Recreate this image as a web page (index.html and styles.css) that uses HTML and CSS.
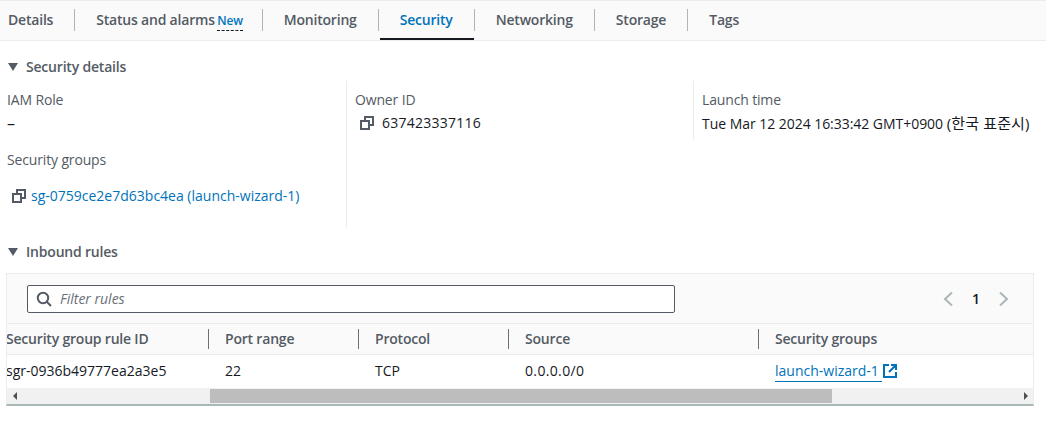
FILE: index.html
```html
<!DOCTYPE html>
<html lang="en">
<head>
<meta charset="utf-8">
<title>Security</title>
<link rel="stylesheet" href="styles.css">
</head>
<body>
<nav class="tabs">
  <a class="tab tab-first">Details</a>
  <a class="tab">Status and alarms <span class="new">New</span></a>
  <a class="tab">Monitoring</a>
  <a class="tab tab-active">Security</a>
  <a class="tab">Networking</a>
  <a class="tab">Storage</a>
  <a class="tab tab-last">Tags</a>
</nav>
<section class="section">
  <h2 class="heading"><svg class="caret" viewBox="0 0 10 8" width="10" height="8"><path d="M0 0h10L5 8z" fill="#545b64"/></svg>Security details</h2>
  <div class="details">
    <div class="col col-1">
      <div class="label">IAM Role</div>
      <div class="value dash">–</div>
      <div class="label label-sg">Security groups</div>
      <div class="value value-sg">
        <svg class="copy" viewBox="0 0 14 14" width="14" height="14"><path d="M5 4V1h8v8h-3M1 5h8v8H1z" fill="none" stroke="#545b64" stroke-width="2"/></svg>
        <a class="link">sg-0759ce2e7d63bc4ea (launch-wizard-1)</a>
      </div>
    </div>
    <div class="col col-2">
      <div class="label">Owner ID</div>
      <div class="value value-owner">
        <svg class="copy" viewBox="0 0 14 14" width="14" height="14"><path d="M5 4V1h8v8h-3M1 5h8v8H1z" fill="none" stroke="#545b64" stroke-width="2"/></svg>
        <span class="digits">637423337116</span>
      </div>
    </div>
    <div class="col col-3">
      <div class="label">Launch time</div>
      <div class="value"><span class="date">Tue Mar 12 2024 16:33:42 GMT+0900</span> <span class="ko">(한국 표준시)</span></div>
    </div>
  </div>
  <h2 class="heading heading-inbound"><svg class="caret" viewBox="0 0 10 8" width="10" height="8"><path d="M0 0h10L5 8z" fill="#545b64"/></svg>Inbound rules</h2>
  <div class="table">
    <div class="toolbar">
      <div class="filter">
        <svg class="search" viewBox="0 0 16 16" width="16" height="16"><circle cx="7" cy="7" r="5.2" fill="none" stroke="#545b64" stroke-width="2"/><path d="M11 11l4 4" stroke="#545b64" stroke-width="2"/></svg>
        <span class="placeholder">Filter rules</span>
      </div>
      <div class="pager">
        <svg viewBox="0 0 12 16" width="12" height="16"><path d="M10 1.5L3 8l7 6.5" fill="none" stroke="#aab7b8" stroke-width="2"/></svg>
        <span class="page">1</span>
        <svg viewBox="0 0 12 16" width="12" height="16"><path d="M2 1.5L9 8l-7 6.5" fill="none" stroke="#aab7b8" stroke-width="2"/></svg>
      </div>
    </div>
    <div class="row row-head">
      <div class="cell cell-1">Security group rule ID</div>
      <div class="cell">Port range</div>
      <div class="cell">Protocol</div>
      <div class="cell cell-wide">Source</div>
      <div class="cell">Security groups</div>
    </div>
    <div class="row row-body">
      <div class="cell cell-1">sgr-0936b49777ea2a3e5</div>
      <div class="cell">22</div>
      <div class="cell">TCP</div>
      <div class="cell cell-wide"><span class="ip">0.0.0.0/0</span></div>
      <div class="cell"><a class="link link-ext">launch-wizard-1 </a><svg class="ext" viewBox="0 0 14 14" width="14" height="14"><path d="M6 1H1v12h12V8M8 1h5v5M13 1L6 8" fill="none" stroke="#0073bb" stroke-width="2"/></svg></div>
    </div>
    <div class="scrollbar">
      <span class="arrow arrow-left"></span>
      <div class="track"><div class="thumb"></div></div>
      <span class="arrow arrow-right"></span>
    </div>
  </div>
</section>
</body>
</html>
```
FILE: styles.css
```css
* { box-sizing: border-box; }
html, body { margin: 0; padding: 0; background: #fff; }
body {
  font-family: "Open Sans", "Noto Sans", "Noto Sans CJK KR", sans-serif;
  font-size: 14px;
  line-height: 20px;
  color: #16191f;
  overflow: hidden;
}
.tabs {
  display: flex;
  height: 41px;
  padding-top: 8px;
  background: #fafafa;
  border-top: 1px solid #eaeded;
  border-bottom: 1px solid #eaeded;
}
.tab {
  position: relative;
  flex: none;
  height: 31px;
  padding: 1px 22px 0 21px;
  font-weight: 600;
  letter-spacing: -0.2px;
  color: #545b64;
  line-height: 20px;
  white-space: nowrap;
}
.tab::after {
  content: "";
  position: absolute;
  right: 0;
  top: 0;
  width: 1px;
  height: 22px;
  background: #aab7b8;
}
.tab-first { padding-left: 8px; }
.tab-last::after { display: none; }
.tab-active { color: #0073bb; }
.tab-active::before {
  content: "";
  position: absolute;
  left: 1px;
  right: 1px;
  bottom: 0;
  height: 2px;
  background: #16191f;
}
.new {
  margin: 0 -2px 0 -1px;
  font-size: 12px;
  color: #0073bb;
  border-bottom: 1px dashed #16191f;
  padding-bottom: 1px;
}
.heading {
  display: flex;
  align-items: center;
  gap: 8px;
  margin: 0;
  padding: 16px 0 0 8px;
  font-size: 14px;
  font-weight: 600;
  letter-spacing: -0.2px;
  line-height: 20px;
  color: #545b64;
}
.caret { flex: none; }
.details {
  display: grid;
  grid-template-columns: 340px 346px 354px;
  align-items: start;
  padding: 4px 0 0 7px;
  height: 160px;
}
.col { padding-top: 9px; }
.col-2, .col-3 { border-left: 1px solid #eaeded; padding-left: 8px; }
.col-2 { height: 147px; margin-left: -1px; }
.col-3 { height: 59px; }
.label { color: #545b64; letter-spacing: -0.15px; }
.value { margin-top: 3px; white-space: nowrap; }
.dash { font-size: 16px; }
.date { letter-spacing: -0.04px; }
.digits { letter-spacing: 0.25px; }
.ip { letter-spacing: 0.35px; }
.ko { font-size: 15px; letter-spacing: 0.15px; }
.label-sg { margin-top: 17px; }
.value-sg { display: flex; align-items: center; gap: 5px; margin-top: 16px; padding-left: 5px; }
.value-owner { display: flex; align-items: center; gap: 8px; padding-left: 5px; }
.copy { flex: none; }
.link { color: #0073bb; }
.heading-inbound { padding-top: 5px; }
.table {
  width: 1028px;
  margin: 11px 0 0 6px;
  border: 1px solid #eaeded;
  border-bottom: 2px solid #aab7b8;
  overflow: hidden;
}
.toolbar {
  display: flex;
  justify-content: space-between;
  height: 50px;
  padding: 11px 0 0 20px;
  background: #fafafa;
  border-bottom: 1px solid #eaeded;
}
.filter {
  display: flex;
  align-items: center;
  gap: 8px;
  width: 648px;
  height: 28px;
  padding-left: 8px;
  background: #fff;
  border: 1px solid #545b64;
  border-radius: 2px;
}
.placeholder { font-style: italic; color: #687078; }
.pager {
  display: flex;
  align-items: center;
  height: 28px;
  gap: 18px;
  padding-right: 23px;
}
.page { font-weight: 600; }
.row { display: flex; align-items: center; }
.row-head {
  height: 31px;
  background: #fafafa;
  border-bottom: 1px solid #eaeded;
  font-weight: 600;
  letter-spacing: -0.2px;
  color: #545b64;
}
.row-body { height: 33px; padding-bottom: 2px; }
.cell {
  position: relative;
  flex: none;
  width: 150px;
  padding-left: 17px;
  white-space: nowrap;
}
.cell-1 { width: 202px; padding-left: 0; margin-left: -1px; }
.cell-wide { width: 250px; }
.row-head .cell:not(.cell-1)::before {
  content: "";
  position: absolute;
  left: 0;
  top: 0;
  width: 1px;
  height: 20px;
  background: #687078;
}
.link-ext { border-bottom: 1px solid #0073bb; padding-bottom: 1px; white-space: pre; }
.ext { margin-left: 1px; vertical-align: -2px; }
.scrollbar {
  display: flex;
  align-items: center;
  height: 16px;
  background: #f1f1f1;
}
.track { flex: 1; height: 14px; padding-left: 187px; }
.thumb { width: 622px; height: 14px; background: #bdbdbd; }
.arrow { flex: none; width: 16px; height: 16px; position: relative; }
.arrow::after {
  content: "";
  position: absolute;
  top: 4px;
  border-top: 4px solid transparent;
  border-bottom: 4px solid transparent;
}
.arrow-left::after { left: 6px; border-right: 4px solid #505050; }
.arrow-right::after { left: 7px; border-left: 4px solid #505050; }
```
